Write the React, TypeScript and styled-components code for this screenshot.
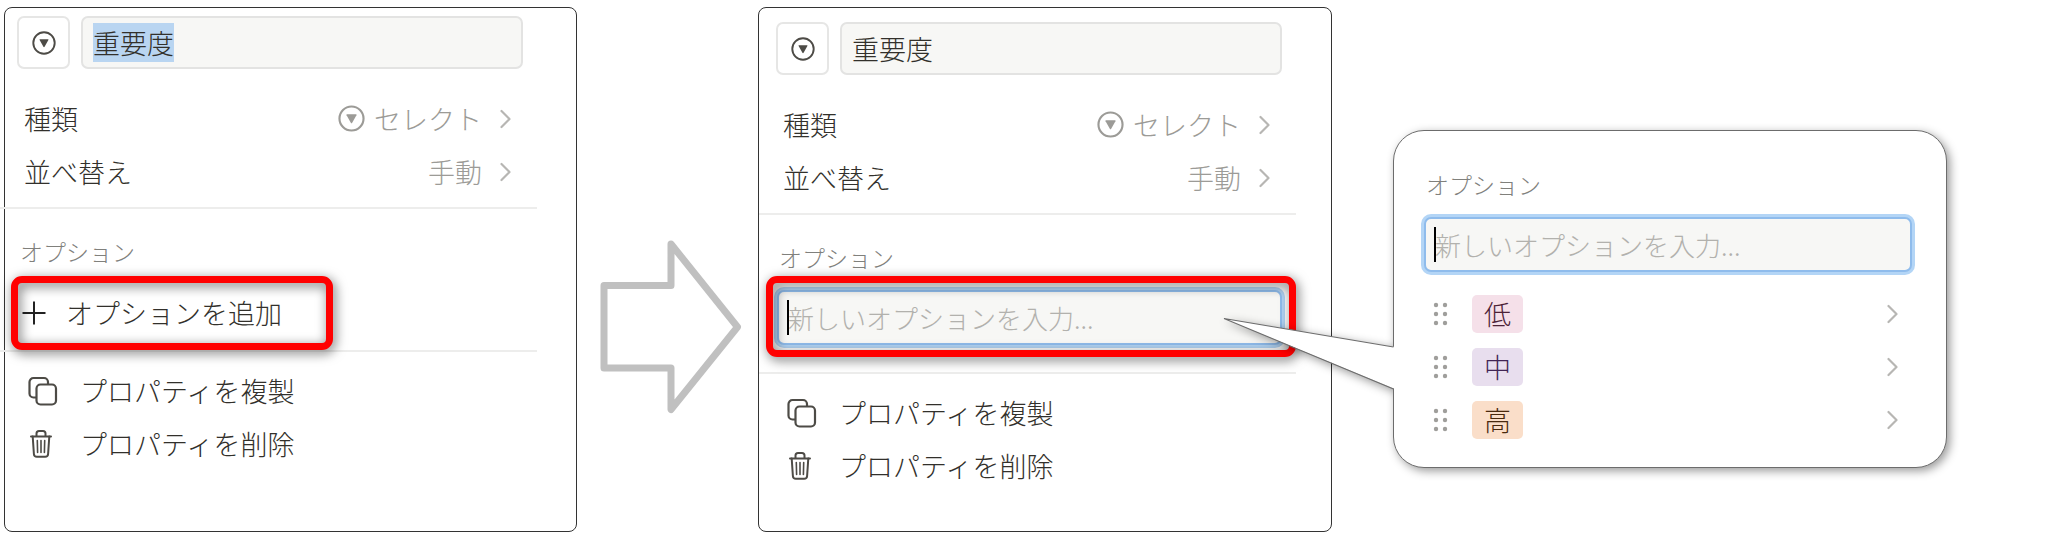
import React, { useEffect, useRef } from "react";
import styled, { createGlobalStyle } from "styled-components";

const GlobalStyle = createGlobalStyle`
  *, *::before, *::after { box-sizing: border-box; }
  body {
    margin: 0;
    background: #fff;
    color: #32302b;
    font-family: "Noto Sans CJK JP", sans-serif;
    font-weight: 300;
    font-size: 27px;
    line-height: 40px;
  }
  button, input { font: inherit; color: inherit; margin: 0; }
  button { background: none; border: 0; padding: 0; cursor: pointer; text-align: left; }
  svg { display: block; flex: none; }
`;

const Page = styled.main`
  display: grid;
  grid-template-columns:
    minmax(0, 573fr) minmax(0, 181fr) minmax(0, 574fr)
    minmax(0, 61fr) minmax(0, 554fr) minmax(0, 101fr);
  padding: 7px 0 16px 4px;
`;

const Panel = styled.section`
  border: 1px solid #333;
  border-radius: 8px;
  padding-bottom: 39px;
`;

const PanelBody = styled.div<{ $shifted?: boolean }>`
  margin: ${(p) => (p.$shifted ? "0 39px 0 -5px" : "6px 35px 0 0")};
`;

const Header = styled.div`
  display: flex;
  gap: 11px;
  padding: 8px 14px 23px 17px;
`;

const TypeButton = styled.button`
  display: grid;
  place-items: center;
  flex: none;
  width: 53px;
  height: 53px;
  border: 2px solid #e6e6e5;
  border-radius: 7px;
`;

const NameInput = styled.input`
  flex: 1;
  min-width: 0;
  height: 53px;
  padding: 0 10px;
  border: 2px solid #e3e3e2;
  border-radius: 7px;
  background: #f7f7f5;
  outline: none;
  &::selection { background: #b9d5f1; color: #32302b; }
`;

const SettingRow = styled.button`
  display: flex;
  align-items: center;
  width: 100%;
  height: 53px;
  padding: 0 26px 0 24px;
`;

const SettingValue = styled.span`
  display: flex;
  align-items: center;
  gap: 9px;
  margin-left: auto;
  margin-right: 18px;
  color: #9c9b97;
`;

const Divider = styled.hr`
  height: 2px;
  margin: 0;
  border: 0;
  background: #ededec;
`;

const RowGroup = styled.div`
  padding-bottom: 9px;
`;

const Caption = styled.h2`
  margin: 0;
  font-size: 23px;
  font-weight: 300;
  line-height: 32px;
  color: #80807c;
`;

const PanelCaption = styled(Caption)<{ $tight?: boolean }>`
  padding: 26px 0 ${(p) => (p.$tight ? 3 : 9)}px 20px;
`;

const Highlight = styled.div<{ $wide?: boolean }>`
  position: relative;
  width: ${(p) => (p.$wide ? "auto" : "60%")};
  margin: ${(p) => (p.$wide ? "0 0 15px 7px" : "0 0 0 11px")};
  padding: ${(p) => (p.$wide ? "14px 14px 12px 11px" : "7px")};
  &::after {
    content: "";
    position: absolute;
    inset: 0;
    border: 7px solid #ff0000;
    border-radius: 11px;
    filter: drop-shadow(2px 3px 6px rgba(0, 0, 0, 0.6));
    pointer-events: none;
  }
`;

const AddButton = styled.button`
  display: flex;
  align-items: center;
  gap: 20px;
  width: 100%;
  height: 60px;
  padding-left: 4px;
`;

const MenuList = styled.div`
  padding-top: 12px;
`;

const MenuItem = styled.button`
  display: flex;
  align-items: center;
  gap: 22px;
  width: 100%;
  height: 53px;
  padding-left: 27px;
`;

const ArrowCell = styled.div`
  padding: 232px 0 0 23px;
`;

const OptionField = styled.div`
  position: relative;
`;

const OptionInput = styled.input`
  display: block;
  width: 100%;
  height: 55px;
  padding: 0 9px;
  border: 2px solid #8fbcec;
  border-radius: 7px;
  background: #f7f7f5;
  box-shadow: 0 0 0 3px #b3d5f6;
  font-size: 26px;
  outline: none;
  &::placeholder { color: #b2b1ad; opacity: 1; }
`;

const Caret = styled.span`
  position: absolute;
  top: 10px;
  left: 10px;
  width: 2px;
  height: 35px;
  background: #000;
`;

const Callout = styled.section`
  position: relative;
  grid-column: 5;
  align-self: start;
  margin-top: 123px;
  padding: 37px 34px 21px 30px;
  border: 1px solid #6c6c6c;
  border-radius: 31px;
  background: #fff;
  filter: drop-shadow(3px 3px 5px rgba(0, 0, 0, 0.4));
`;

const Tail = styled.svg`
  position: absolute;
  top: 186px;
  left: -171px;
`;

const CalloutCaption = styled(Caption)`
  padding: 0 0 17px 2px;
`;

const OptionList = styled.ul`
  margin: 0;
  padding: 15px 0 0;
  list-style: none;
`;

const OptionRow = styled.li`
  display: flex;
  align-items: center;
  height: 53px;
  padding: 0 14px 0 9px;
`;

const Tag = styled.span<{ $bg: string; $ink: string }>`
  margin-left: 24px;
  margin-right: auto;
  padding: 0 12px;
  border-radius: 5px;
  line-height: 38px;
  background: ${(p) => p.$bg};
  color: ${(p) => p.$ink};
`;

const SelectIcon = ({ size, color }: { size: number; color: string }) => (
  <svg width={size} height={size} viewBox="0 0 24 24" aria-hidden="true">
    <circle cx="12" cy="12" r="10.7" fill="none" stroke={color} strokeWidth="1.9" />
    <path d="M8 8.300h8q.8 0 .4.8l-3.800 6.700q-.6.9-1.200 0L7.600 9.100q-.4-.8.4-.8z" fill={color} />
  </svg>
);

const Chevron = () => (
  <svg width="11" height="20" viewBox="0 0 11 20" fill="none" stroke="#b7b6b3" strokeWidth="2.200" strokeLinecap="round" strokeLinejoin="round" aria-hidden="true">
    <path d="M1.500 2 9.500 10l-8 8" />
  </svg>
);

const PlusIcon = () => (
  <svg width="24" height="24" viewBox="0 0 24 24" stroke="#222" strokeWidth="2" aria-hidden="true">
    <path d="M12 .5v23M.5 12h23" />
  </svg>
);

const CopyIcon = () => (
  <svg width="31" height="30" viewBox="0 0 31 30" fill="none" stroke="#4d4b46" strokeWidth="2.200" aria-hidden="true">
    <path d="M9 21.500H6.500a4 4 0 0 1-4-4V6a4 4 0 0 1 4-4H17a4 4 0 0 1 4 4v2" />
    <rect x="9.500" y="8.500" width="19.500" height="20" rx="4" />
  </svg>
);

const TrashIcon = () => (
  <svg width="31" height="30" viewBox="0 0 31 30" fill="none" stroke="#4d4b46" strokeWidth="2" strokeLinecap="round" strokeLinejoin="round" aria-hidden="true">
    <path d="M4 7.500h20M9.500 7V4.500a2.500 2.500 0 0 1 2.500-2.500h4a2.500 2.500 0 0 1 2.500 2.500V7" />
    <path d="M5.700 7.500l1.200 17.500a3 3 0 0 0 3 2.800h8.200a3 3 0 0 0 3-2.800L22.300 7.500" />
    <path d="M10.300 11.500l.3 12M14 11.500v12M17.700 11.500l-.3 12" strokeWidth="1.600" />
  </svg>
);

const HandleIcon = () => (
  <svg width="15" height="26" viewBox="0 0 15 26" fill="#9f9e9b" aria-hidden="true">
    {[4, 13, 22].map((y) => (
      <React.Fragment key={y}>
        <circle cx="3" cy={y} r="2.200" />
        <circle cx="12" cy={y} r="2.200" />
      </React.Fragment>
    ))}
  </svg>
);

const Arrow = () => (
  <svg width="142" height="176" viewBox="600 238 142 176" fill="none" stroke="#c0c0c0" strokeWidth="7" strokeLinejoin="round" aria-hidden="true">
    <path d="M604 284.500h67V243l66.500 83L671 408.500V367h-67z" />
  </svg>
);

const NewOptionField = () => (
  <OptionField>
    <OptionInput type="text" aria-label="新しいオプション" placeholder="新しいオプションを入力..." />
    <Caret />
  </OptionField>
);

const PropertyHeader = ({ selected }: { selected?: boolean }) => {
  const input = useRef<HTMLInputElement>(null);
  useEffect(() => {
    if (selected && input.current) {
      input.current.focus();
      input.current.select();
    }
  }, [selected]);
  return (
    <Header>
      <TypeButton type="button" aria-label="アイコン">
        <SelectIcon size={24} color="#4d4b46" />
      </TypeButton>
      <NameInput ref={input} type="text" aria-label="プロパティ名" defaultValue="重要度" />
    </Header>
  );
};

const Settings = () => (
  <RowGroup>
    <SettingRow type="button">
      種類
      <SettingValue>
        <SelectIcon size={27} color="#9c9b97" />
        セレクト
      </SettingValue>
      <Chevron />
    </SettingRow>
    <SettingRow type="button">
      並べ替え
      <SettingValue>手動</SettingValue>
      <Chevron />
    </SettingRow>
  </RowGroup>
);

const Actions = () => (
  <MenuList>
    <MenuItem type="button">
      <CopyIcon />
      プロパティを複製
    </MenuItem>
    <MenuItem type="button">
      <TrashIcon />
      プロパティを削除
    </MenuItem>
  </MenuList>
);

const options = [
  { name: "低", bg: "#f5e0e9", ink: "#4c2337" },
  { name: "中", bg: "#e8deee", ink: "#412454" },
  { name: "高", bg: "#fadec9", ink: "#49290e" },
];

export default function App() {
  return (
    <>
      <GlobalStyle />
      <Page>
        <Panel>
          <PanelBody $shifted>
            <PropertyHeader selected />
            <Settings />
            <Divider />
            <PanelCaption>オプション</PanelCaption>
            <Highlight>
              <AddButton type="button">
                <PlusIcon />
                オプションを追加
              </AddButton>
            </Highlight>
            <Divider />
            <Actions />
          </PanelBody>
        </Panel>
        <ArrowCell>
          <Arrow />
        </ArrowCell>
        <Panel>
          <PanelBody>
            <PropertyHeader />
            <Settings />
            <Divider />
            <PanelCaption $tight>オプション</PanelCaption>
            <Highlight $wide>
              <NewOptionField />
            </Highlight>
            <Divider />
            <Actions />
          </PanelBody>
        </Panel>
        <Callout>
          <Tail width="172" height="74" viewBox="0 0 172 74" aria-hidden="true">
            <path d="M172 30 1 1.500 172 72z" fill="#fff" />
            <path d="M170.500 30 1 1.500 170.500 72" fill="none" stroke="#6c6c6c" strokeWidth="1.200" />
          </Tail>
          <CalloutCaption>オプション</CalloutCaption>
          <NewOptionField />
          <OptionList>
            {options.map((option) => (
              <OptionRow key={option.name}>
                <HandleIcon />
                <Tag $bg={option.bg} $ink={option.ink}>{option.name}</Tag>
                <Chevron />
              </OptionRow>
            ))}
          </OptionList>
        </Callout>
      </Page>
    </>
  );
}
